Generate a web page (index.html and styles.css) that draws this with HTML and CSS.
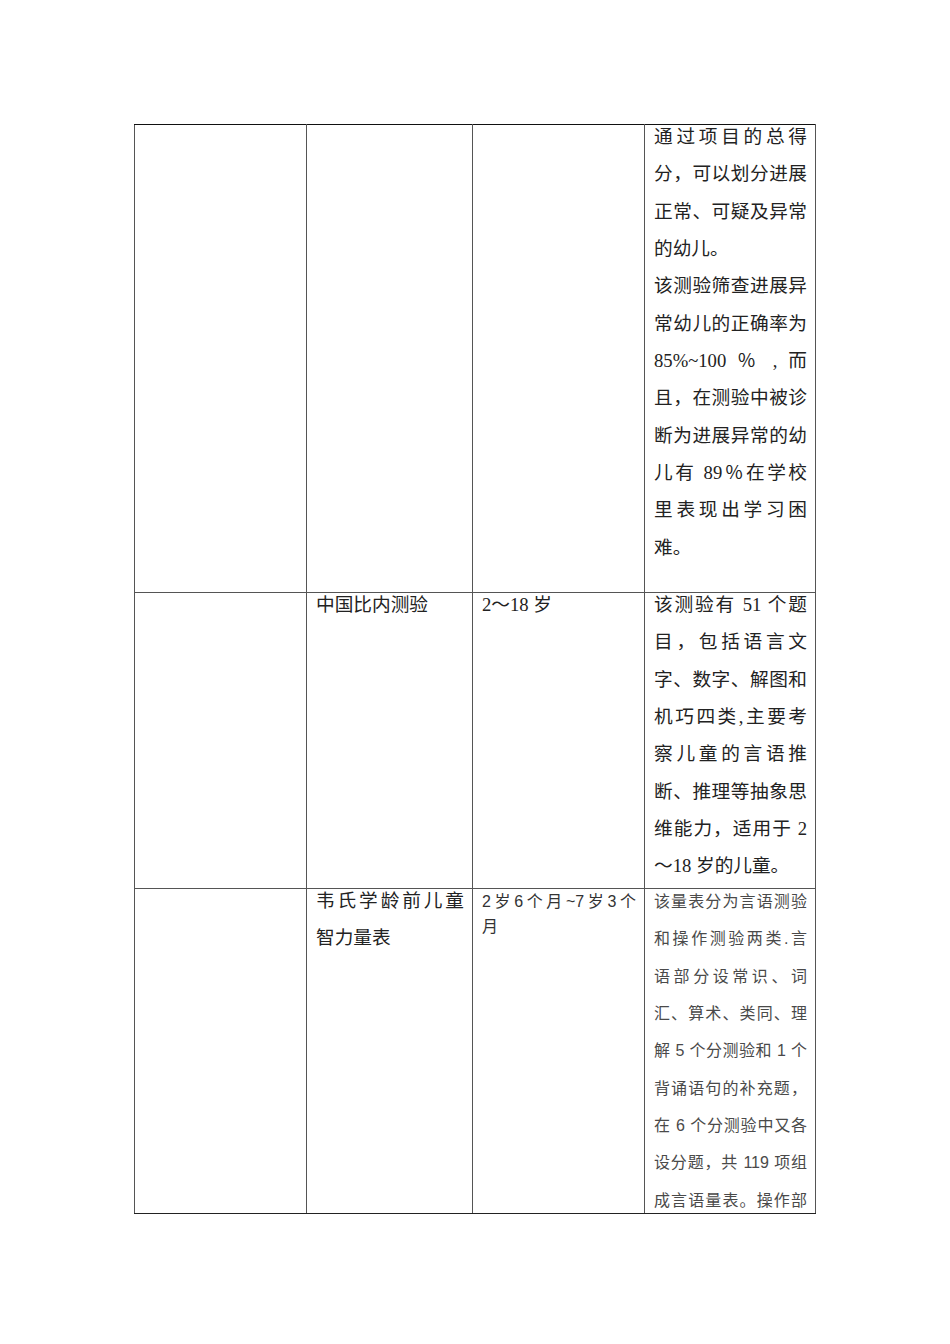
FILE: index.html
```html
<!DOCTYPE html>
<html lang="zh-CN">
<head>
<meta charset="utf-8">
<title>测验表</title>
<link rel="stylesheet" href="styles.css">
</head>
<body>
<div class="page">
  <table class="grid">
    <colgroup>
      <col class="c1"><col class="c2"><col class="c3"><col class="c4">
    </colgroup>
    <tbody>
      <tr class="r1">
        <td><div class="cell"></div></td>
        <td><div class="cell"></div></td>
        <td><div class="cell"></div></td>
        <td>
          <div class="cell">
            <div class="txt big">
              <span class="ln">通过项目的总得</span>
              <span class="ln">分，可以划分进展</span>
              <span class="ln">正常、可疑及异常</span>
              <span class="ln end">的幼儿。</span>
              <span class="ln">该测验筛查进展异</span>
              <span class="ln">常幼儿的正确率为</span>
              <span class="ln">85%~100 ％ , 而</span>
              <span class="ln">且，在测验中被诊</span>
              <span class="ln">断为进展异常的幼</span>
              <span class="ln">儿有 89％在学校</span>
              <span class="ln">里表现出学习困</span>
              <span class="ln end">难。</span>
            </div>
          </div>
        </td>
      </tr>
      <tr class="r2">
        <td><div class="cell"></div></td>
        <td><div class="cell"><div class="txt big"><span class="ln end">中国比内测验</span></div></div></td>
        <td><div class="cell"><div class="txt big"><span class="ln end">2～18 岁</span></div></div></td>
        <td>
          <div class="cell">
            <div class="txt big">
              <span class="ln">该测验有 51 个题</span>
              <span class="ln">目，包括语言文</span>
              <span class="ln">字、数字、解图和</span>
              <span class="ln">机巧四类,主要考</span>
              <span class="ln">察儿童的言语推</span>
              <span class="ln">断、推理等抽象思</span>
              <span class="ln">维能力，适用于 2</span>
              <span class="ln end">～18 岁的儿童。</span>
            </div>
          </div>
        </td>
      </tr>
      <tr class="r3">
        <td><div class="cell"></div></td>
        <td>
          <div class="cell">
            <div class="txt big">
              <span class="ln">韦氏学龄前儿童</span>
              <span class="ln end">智力量表</span>
            </div>
          </div>
        </td>
        <td>
          <div class="cell">
            <div class="txt small tight">
              <span class="ln">2岁6个月~7岁3个</span>
              <span class="ln end">月</span>
            </div>
          </div>
        </td>
        <td>
          <div class="cell">
            <div class="txt small">
              <span class="ln">该量表分为言语测验</span>
              <span class="ln">和操作测验两类.言</span>
              <span class="ln">语部分设常识、词</span>
              <span class="ln">汇、算术、类同、理</span>
              <span class="ln">解 5 个分测验和 1 个</span>
              <span class="ln">背诵语句的补充题，</span>
              <span class="ln">在 6 个分测验中又各</span>
              <span class="ln">设分题，共 119 项组</span>
              <span class="ln">成言语量表。操作部</span>
            </div>
          </div>
        </td>
      </tr>
    </tbody>
  </table>
</div>
</body>
</html>
```

FILE: styles.css
```css
html, body {
  margin: 0;
  padding: 0;
  background: #ffffff;
}

.page {
  width: 950px;
  height: 1344px;
  box-sizing: border-box;
  padding: 124px 0 0 134px;
  overflow: hidden;
}

.grid {
  border-collapse: collapse;
  table-layout: fixed;
  width: 681px;
}

.c1 { width: 172px; }
.c2 { width: 166px; }
.c3 { width: 172px; }
.c4 { width: 171px; }

.grid td {
  border: 1px solid #555;
  padding: 0 8px 0 9px;
  vertical-align: top;
}

.grid tr:first-child td {
  border-top-color: #111;
}

.grid tr:last-child td {
  border-bottom-color: #222;
}

.grid tr + tr td {
  border-top-color: #222;
}

.cell {
  overflow: hidden;
}

.r1 .cell { height: 467px; }
.r2 .cell { height: 295px; }
.r3 .cell { height: 324px; }

.txt {
  color: #222;
}

.txt.big {
  font-family: "Liberation Serif", "Noto Sans CJK SC", serif;
  font-size: 18.67px;
  line-height: 37.33px;
  margin-top: -7px;
}

.txt.small {
  font-family: "Liberation Sans", "Noto Sans CJK SC", sans-serif;
  font-size: 16px;
  line-height: 37.33px;
  margin-top: -6px;
  color: #4a4a4a;
}

.txt.small.tight {
  line-height: 25px;
  margin-top: 0;
  color: #333;
}

.ln {
  display: block;
  text-align: justify;
  text-align-last: justify;
}

.ln.end {
  text-align: left;
  text-align-last: left;
}
```
